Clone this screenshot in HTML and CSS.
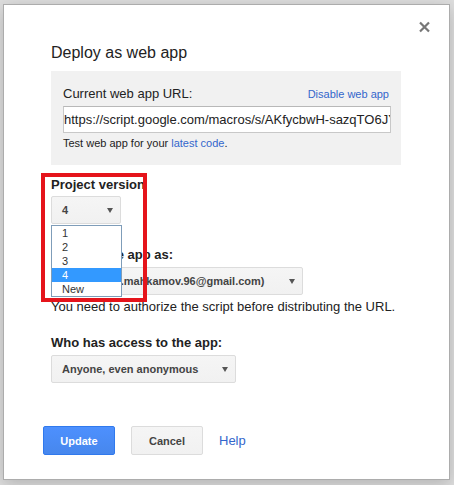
FILE: index.html
```html
<!DOCTYPE html>
<html lang="en">
<head>
<meta charset="utf-8">
<title>Deploy as web app</title>
<link rel="stylesheet" href="styles.css">
</head>
<body>
<div class="dialog">
  <button class="close" aria-label="Close">
    <svg width="11" height="12" viewBox="0 0 11 12"><path d="M1 1.5 L10 10.5 M10 1.5 L1 10.5" stroke="#777" stroke-width="2.2" fill="none"/></svg>
  </button>
  <h1 class="title">Deploy as web app</h1>
  <div class="panel">
    <div class="url-row">
      <span class="url-label">Current web app URL:</span>
      <a class="link small">Disable web app</a>
    </div>
    <div class="url-input">https://script.google.com/macros/s/AKfycbwH-sazqTO6JYxkUmT0pQz8rLvW/exec</div>
    <div class="hint">Test web app for your <a class="link">latest code</a>.</div>
  </div>

  <div class="field-label first">Project version</div>
  <div class="select-wrap">
    <div class="select s-version"><span>4</span><svg class="arrow" width="6" height="5" viewBox="0 0 6 5"><polygon points="0,0 6,0 3,5" fill="#555"/></svg></div>
    <ul class="options">
      <li>1</li>
      <li>2</li>
      <li>3</li>
      <li class="selected">4</li>
      <li>New</li>
    </ul>
  </div>

  <div class="field-label gap-lg">Execute the app as:</div>
  <div class="select s-email"><span>Me (rustam.mahkamov.96@gmail.com)</span><svg class="arrow" width="6" height="5" viewBox="0 0 6 5"><polygon points="0,0 6,0 3,5" fill="#555"/></svg></div>
  <div class="note">You need to authorize the script before distributing the URL.</div>

  <div class="field-label gap-md">Who has access to the app:</div>
  <div class="select s-access"><span>Anyone, even anonymous</span><svg class="arrow" width="6" height="5" viewBox="0 0 6 5"><polygon points="0,0 6,0 3,5" fill="#555"/></svg></div>

  <div class="actions">
    <button class="btn btn-primary">Update</button>
    <button class="btn">Cancel</button>
    <a class="link help">Help</a>
  </div>

  <div class="annotation"></div>
</div>
</body>
</html>
```
FILE: styles.css
```css
html, body {
  margin: 0;
  padding: 0;
}
body {
  background: #dedede;
  font-family: "Liberation Sans", Arial, sans-serif;
  color: #222;
  width: 454px;
  height: 485px;
  overflow: hidden;
}
.dialog {
  position: relative;
  box-sizing: border-box;
  width: 447px;
  height: 476px;
  margin: 4px 0 0 3px;
  padding: 38px 0 0 47px;
  background: #fff;
  border: 1px solid #acacac;
  box-shadow: 0 4px 16px rgba(0, 0, 0, 0.2);
}
.close {
  position: absolute;
  top: 16px;
  right: 19px;
  width: 11px;
  height: 12px;
  padding: 0;
  border: 0;
  background: none;
  display: flex;
}
.title {
  margin: 0;
  font-size: 16px;
  line-height: 20px;
  font-weight: normal;
  color: #222;
}
.panel {
  margin-top: 8px;
  width: 350px;
  box-sizing: border-box;
  padding: 15px 10px 15px 12px;
  background: #f1f1f1;
}
.url-row {
  display: flex;
  justify-content: space-between;
  align-items: baseline;
  padding-right: 2px;
  line-height: 16px;
}
.url-label {
  font-size: 13px;
}
.link {
  color: #3366cc;
  text-decoration: none;
  cursor: pointer;
}
.small {
  font-size: 11px;
}
.url-input {
  margin-top: 4px;
  box-sizing: border-box;
  width: 328px;
  height: 27px;
  padding: 0;
  background: #fff;
  border: 1px solid #c8c8c8;
  border-top-color: #b8b8b8;
  font-size: 13px;
  line-height: 25px;
  white-space: nowrap;
  overflow: hidden;
  color: #222;
}
.hint {
  margin-top: 3px;
  font-size: 11px;
  line-height: 14px;
}
.field-label {
  font-size: 13px;
  font-weight: bold;
  line-height: 16px;
  color: #222;
}
.field-label.first {
  margin-top: 12px;
}
.field-label.gap-lg {
  margin-top: 23px;
}
.field-label.gap-md {
  margin-top: 20px;
}
.select-wrap {
  position: relative;
  width: 70px;
  margin-top: 3px;
}
.select {
  box-sizing: border-box;
  height: 28px;
  display: flex;
  align-items: center;
  justify-content: space-between;
  padding: 0 7px 0 10px;
  background: linear-gradient(#f5f5f5, #f1f1f1);
  border: 1px solid #dcdcdc;
  border-radius: 2px;
  font-size: 11px;
  font-weight: bold;
  color: #444;
  white-space: nowrap;
  overflow: hidden;
}
.s-version {
  width: 70px;
}
.s-email {
  width: 252px;
  margin-top: 4px;
}
.s-access {
  width: 185px;
  margin-top: 4px;
}
.arrow {
  flex: none;
}
.options {
  position: absolute;
  top: 29px;
  left: 0;
  width: 71px;
  box-sizing: border-box;
  margin: 0;
  padding: 0;
  list-style: none;
  background: #fff;
  border: 1px solid #7f9db9;
  font-size: 11px;
  line-height: 14px;
  color: #333;
  z-index: 2;
}
.options li {
  padding-left: 10px;
  height: 14px;
}
.options li.selected {
  background: #3399ff;
  color: #fff;
}
.note {
  margin-top: 4px;
  font-size: 13px;
  line-height: 16px;
  color: #222;
}
.actions {
  margin: 43px 0 0 -8px;
  display: flex;
  align-items: center;
  gap: 16px;
}
.btn {
  box-sizing: border-box;
  width: 72px;
  height: 29px;
  padding: 0;
  border: 1px solid #dcdcdc;
  border-radius: 2px;
  background: linear-gradient(#f5f5f5, #f1f1f1);
  font-family: "Liberation Sans", Arial, sans-serif;
  font-size: 11px;
  font-weight: bold;
  color: #444;
}
.btn-primary {
  background: linear-gradient(#4d90fe, #4787ed);
  border-color: #3079ed;
  color: #fff;
}
.help {
  font-size: 13px;
}
.annotation {
  position: absolute;
  left: 37px;
  top: 168px;
  width: 106px;
  height: 129px;
  box-sizing: border-box;
  border: 4px solid #e5141b;
  z-index: 3;
  pointer-events: none;
}
```
